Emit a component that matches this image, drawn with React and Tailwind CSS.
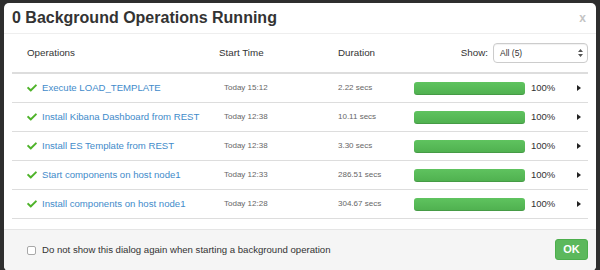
import React from 'react';
import { FaCheck } from 'react-icons/fa';

const ops = [
  { name: 'Execute LOAD_TEMPLATE', start: 'Today 15:12', duration: '2.22 secs' },
  { name: 'Install Kibana Dashboard from REST', start: 'Today 12:38', duration: '10.11 secs' },
  { name: 'Install ES Template from REST', start: 'Today 12:38', duration: '3.30 secs' },
  { name: 'Start components on host node1', start: 'Today 12:33', duration: '286.51 secs' },
  { name: 'Install components on host node1', start: 'Today 12:28', duration: '304.67 secs' },
];

const OpRow = ({ op }) => (
  <div className="flex items-center h-[29px] border-b border-[#dddddd]">
    <div className="w-[207px] pl-[15px] flex items-center gap-[5px]">
      <FaCheck className="text-[#4fb32a] w-[10px] h-[10px]" />
      <span className="text-[9.6px] text-[#428bca]">{op.name}</span>
    </div>
    <div className="w-[119px] pl-[5px] text-[8px] text-[#666]">{op.start}</div>
    <div className="w-[76px] text-[8px] text-[#666]">{op.duration}</div>
    <div className="w-[111px] h-[13px] rounded-[3px] bg-gradient-to-b from-[#5fc35f] to-[#4fb04f] shadow-[inset_0_-1px_0_rgba(0,0,0,0.12)]" />
    <div className="ml-[6px] w-[46px] text-[9.5px] text-[#333]">100%</div>
    <div className="w-0 h-0 border-y-[3.5px] border-y-transparent border-l-[4px] border-l-[#222]" />
  </div>
);

export default function App() {
  return (
    <div className="w-[600px] h-[270px] bg-[#2e2e2e] pt-[3px] px-[4px] overflow-hidden" style={{ fontFamily: '"Liberation Sans", Arial, sans-serif' }}>
      <div className="bg-white rounded-[5px] h-[268px] flex flex-col overflow-hidden">
        {/* header */}
        <div className="h-[31px] shrink-0 border-b border-[#eeeeee] pl-[8px] pr-[10px] flex items-center justify-between">
          <h4 className="text-[16px] font-bold text-[#333]">0 Background Operations Running</h4>
          <span className="text-[12px] font-bold text-[#c4c4c4] leading-none">x</span>
        </div>

        {/* body */}
        <div className="px-[8px]">
          <div className="flex items-center h-[40px] border-b-2 border-[#dddddd] text-[9.8px] text-[#333]">
            <div className="w-[207px] pl-[15px]">Operations</div>
            <div className="w-[119px]">Start Time</div>
            <div className="w-[76px]">Duration</div>
            <div className="flex-1 flex items-center justify-end">
              <span className="mr-[5px]">Show:</span>
              <div className="w-[95px] h-[20px] border border-[#cccccc] rounded-[4px] flex items-center justify-between pl-[6px] pr-[4px] shadow-[inset_0_1px_1px_rgba(0,0,0,0.06)]">
                <span className="text-[8.5px]">All (5)</span>
                <svg width="5" height="8" viewBox="0 0 5 8">
                  <path d="M2.5 0 L5 3 L0 3 Z M2.5 8 L5 5 L0 5 Z" fill="#555" />
                </svg>
              </div>
            </div>
          </div>
          {ops.map((op) => (
            <OpRow key={op.name} op={op} />
          ))}
        </div>

        {/* footer */}
        <div className="mt-[10px] flex-1 bg-[#f5f5f5] border-t border-[#e5e5e5] flex items-start justify-between pl-[23px] pr-[8px] pt-[9px]">
          <label className="flex items-center gap-[6px] mt-[4px]">
            <span className="w-[9px] h-[9px] border border-[#a8a8a8] rounded-[2px] bg-white" />
            <span className="text-[9.6px] text-[#333]">Do not show this dialog again when starting a background operation</span>
          </label>
          <button className="w-[33px] h-[21px] rounded-[3px] bg-[#5cb85c] border border-[#4cae4c] text-white text-[11px] font-bold flex items-center justify-center">
            OK
          </button>
        </div>
      </div>
    </div>
  );
}
